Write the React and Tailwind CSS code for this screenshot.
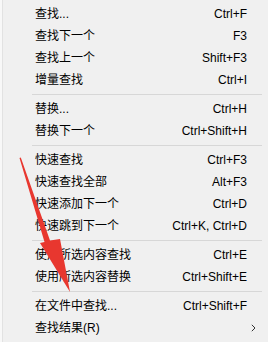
import React from 'react';

const groups = [
    [
        { label: '查找...', key: 'Ctrl+F' },
        { label: '查找下一个', key: 'F3' },
        { label: '查找上一个', key: 'Shift+F3' },
        { label: '增量查找', key: 'Ctrl+I' },
    ],
    [
        { label: '替换...', key: 'Ctrl+H' },
        { label: '替换下一个', key: 'Ctrl+Shift+H' },
    ],
    [
        { label: '快速查找', key: 'Ctrl+F3' },
        { label: '快速查找全部', key: 'Alt+F3' },
        { label: '快速添加下一个', key: 'Ctrl+D' },
        { label: '快速跳到下一个', key: 'Ctrl+K, Ctrl+D' },
    ],
    [
        { label: '使用所选内容查找', key: 'Ctrl+E' },
        { label: '使用所选内容替换', key: 'Ctrl+Shift+E' },
    ],
    [
        { label: '在文件中查找...', key: 'Ctrl+Shift+F' },
        { label: '查找结果(R)', sub: true },
    ],
];

const MenuItem = ({ item }) => (
    <div className="flex items-center h-[22px] pl-[35px] text-[12px] text-black">
        <span className="flex-1 whitespace-nowrap">{item.label}</span>
        {item.key && <span className="whitespace-nowrap">{item.key}</span>}
        <span className="w-[21px] flex items-center pl-[4px]">
            {item.sub && (
                <svg width="5" height="8" viewBox="0 0 5 8">
                    <path d="M0.8 0.8 L4 4 L0.8 7.2" fill="none" stroke="#333" strokeWidth="1" />
                </svg>
            )}
        </span>
    </div>
);

const App = () => {
    return (
        <div
            className="relative w-[268px] h-[342px] overflow-hidden bg-[#f0f0f0] pt-[3px] shadow-[inset_2px_0_0_#f8f8f8,inset_3px_0_0_#e2e2e2]"
            style={{ fontFamily: '"Liberation Sans", "Noto Sans CJK SC", sans-serif' }}
        >
            {groups.map((group, gi) => (
                <div key={gi}>
                    {gi > 0 && (
                        <div className="h-[7px] flex items-center ml-[32px] mr-[6px]">
                            <div className="w-full border-t border-[#d7d7d7]" />
                        </div>
                    )}
                    {group.map((item, i) => (
                        <MenuItem key={i} item={item} />
                    ))}
                </div>
            ))}

            {/* red annotation arrow */}
            <svg className="absolute left-0 top-0 pointer-events-none" width="268" height="342" viewBox="0 0 268 342">
                <polygon
                    points="19.5,158 20.8,157.6 50,240.5 60,239 70,292 40,243 44.5,242"
                    fill="#e8372f"
                />
            </svg>
        </div>
    );
};

export default App;
